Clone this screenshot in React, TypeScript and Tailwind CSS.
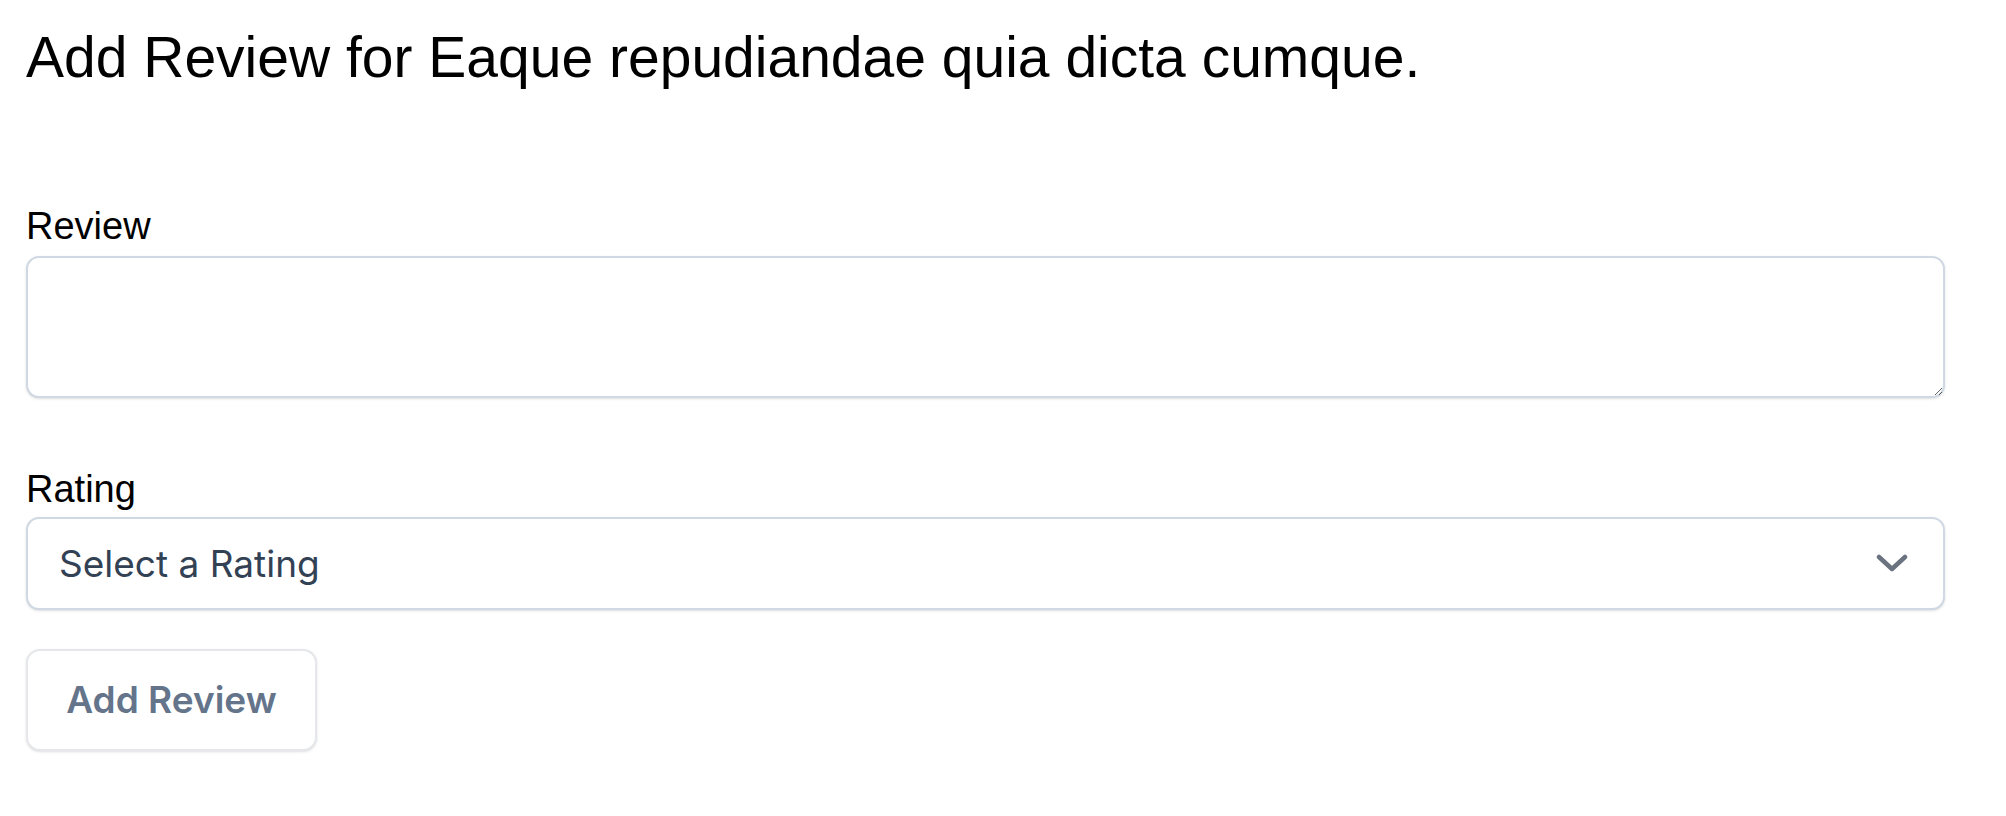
import React from "react";

export default function App() {
  return (
    <div className="min-h-screen bg-white pl-[26px] pt-[23px]">
      <h1 className="text-[57px] leading-[68px] text-black font-normal" style={{ fontFamily: '"Liberation Sans", Arial, sans-serif' }}>
        Add Review for Eaque repudiandae quia dicta cumque.
      </h1>
      <form className="w-[1919px] mt-[109px] flex flex-col" onSubmit={(e) => e.preventDefault()}>
        <label
          htmlFor="review"
          className="block text-[38px] leading-[53px] text-black"
          style={{ fontFamily: '"Liberation Sans", Arial, sans-serif' }}
        >
          Review
        </label>
        <textarea
          id="review"
          className="mt-[3px] block h-[142px] w-full rounded-[13px] border-2 border-[#cfd8e3] bg-white shadow-sm outline-none"
        />
        <label
          htmlFor="rating"
          className="mt-[65px] block text-[38px] leading-[53px] text-black"
          style={{ fontFamily: '"Liberation Sans", Arial, sans-serif' }}
        >
          Rating
        </label>
        <div className="relative mt-[1px]">
          <div
            id="rating"
            className="flex h-[93px] w-full items-center rounded-[13px] border-2 border-[#cfd8e3] bg-white pl-[31px] pr-[35px] shadow-sm"
          >
            <span className="flex-1 text-[37px] text-[#334155]" style={{ fontFamily: 'Inter, "Noto Sans", sans-serif' }}>
              Select a Rating
            </span>
            <svg width="32" height="19" viewBox="0 0 32 19" fill="none">
              <path d="M3 3 L16 15 L29 3" stroke="#6b7280" strokeWidth="4.5" strokeLinecap="round" strokeLinejoin="round" />
            </svg>
          </div>
        </div>
        <div className="mt-[39px]">
          <button
            type="submit"
            className="h-[102px] w-[291px] rounded-[14px] border-2 border-[#e5e7eb] bg-white text-[37px] font-semibold text-[#64748b] shadow-sm"
            style={{ fontFamily: 'Inter, "Noto Sans", sans-serif' }}
          >
            Add Review
          </button>
        </div>
      </form>
    </div>
  );
}
